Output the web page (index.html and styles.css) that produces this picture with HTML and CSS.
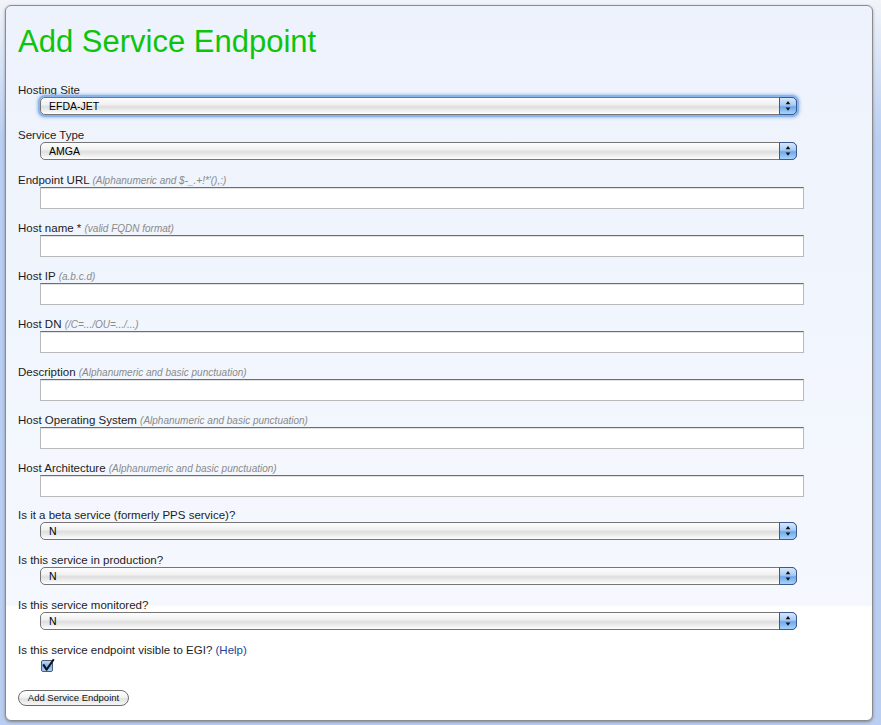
FILE: index.html
```html
<!DOCTYPE html>
<html>
<head>
<meta charset="utf-8">
<title>Add Service Endpoint</title>
<link rel="stylesheet" href="styles.css">
</head>
<body>
<div class="page">
  <div class="panel">
    <h1 class="title">Add Service Endpoint</h1>
    <form class="form">
      <div class="field field-select">
        <label class="lbl">Hosting Site</label>
        <div class="sel sel-focus">
          <select class="sel-input"><option>EFDA-JET</option></select>
          <span class="sel-btn"><svg width="17" height="18" viewBox="0 0 17 18"><path d="M8.5 3.8 L11 7.2 L6 7.2 Z M6 10.6 L11 10.6 L8.5 14 Z" fill="#111"/></svg></span>
        </div>
      </div>
      <div class="field field-select">
        <label class="lbl">Service Type</label>
        <div class="sel">
          <select class="sel-input"><option>AMGA</option></select>
          <span class="sel-btn"><svg width="17" height="18" viewBox="0 0 17 18"><path d="M8.5 3.8 L11 7.2 L6 7.2 Z M6 10.6 L11 10.6 L8.5 14 Z" fill="#111"/></svg></span>
        </div>
      </div>
      <div class="field field-input">
        <label class="lbl">Endpoint URL <span class="hint">(Alphanumeric and $-_.+!*'(),:)</span></label>
        <input class="txt" type="text">
      </div>
      <div class="field field-input">
        <label class="lbl">Host name * <span class="hint">(valid FQDN format)</span></label>
        <input class="txt" type="text">
      </div>
      <div class="field field-input">
        <label class="lbl">Host IP <span class="hint">(a.b.c.d)</span></label>
        <input class="txt" type="text">
      </div>
      <div class="field field-input">
        <label class="lbl">Host DN <span class="hint">(/C=.../OU=.../...)</span></label>
        <input class="txt" type="text">
      </div>
      <div class="field field-input">
        <label class="lbl">Description <span class="hint">(Alphanumeric and basic punctuation)</span></label>
        <input class="txt" type="text">
      </div>
      <div class="field field-input">
        <label class="lbl">Host Operating System <span class="hint">(Alphanumeric and basic punctuation)</span></label>
        <input class="txt" type="text">
      </div>
      <div class="field field-input field-last">
        <label class="lbl">Host Architecture <span class="hint">(Alphanumeric and basic punctuation)</span></label>
        <input class="txt" type="text">
      </div>
      <div class="field field-select">
        <label class="lbl">Is it a beta service (formerly PPS service)?</label>
        <div class="sel">
          <select class="sel-input"><option>N</option></select>
          <span class="sel-btn"><svg width="17" height="18" viewBox="0 0 17 18"><path d="M8.5 3.8 L11 7.2 L6 7.2 Z M6 10.6 L11 10.6 L8.5 14 Z" fill="#111"/></svg></span>
        </div>
      </div>
      <div class="field field-select">
        <label class="lbl">Is this service in production?</label>
        <div class="sel">
          <select class="sel-input"><option>N</option></select>
          <span class="sel-btn"><svg width="17" height="18" viewBox="0 0 17 18"><path d="M8.5 3.8 L11 7.2 L6 7.2 Z M6 10.6 L11 10.6 L8.5 14 Z" fill="#111"/></svg></span>
        </div>
      </div>
      <div class="field field-select">
        <label class="lbl">Is this service monitored?</label>
        <div class="sel">
          <select class="sel-input"><option>N</option></select>
          <span class="sel-btn"><svg width="17" height="18" viewBox="0 0 17 18"><path d="M8.5 3.8 L11 7.2 L6 7.2 Z M6 10.6 L11 10.6 L8.5 14 Z" fill="#111"/></svg></span>
        </div>
      </div>
      <div class="field field-check">
        <label class="lbl">Is this service endpoint visible to EGI? <a class="help" href="#">(Help)</a></label>
        <div class="check">
          <svg width="16" height="16" viewBox="0 0 16 16">
            <defs>
              <linearGradient id="cb" x1="0" y1="0" x2="0" y2="1">
                <stop offset="0" stop-color="#c9def8"/>
                <stop offset="0.5" stop-color="#7fb0ec"/>
                <stop offset="1" stop-color="#a9d2fb"/>
              </linearGradient>
            </defs>
            <rect x="1.5" y="3.5" width="11" height="11" rx="1.5" fill="url(#cb)" stroke="#4a5f80"/>
            <path d="M3.2 7.4 L6.6 12.6 L13.8 2.2" fill="none" stroke="#111" stroke-width="2" stroke-linejoin="round"/>
          </svg>
        </div>
      </div>
      <div class="actions">
        <button class="btn" type="button">Add Service Endpoint</button>
      </div>
    </form>
  </div>
</div>
</body>
</html>
```
FILE: styles.css
```css
html, body {
  margin: 0;
  padding: 0;
}
body {
  background: linear-gradient(#f1f4f9 0px, #b9cef1 140px) no-repeat, #b9cef1;
  font-family: "Liberation Sans", Arial, sans-serif;
  color: #1a1a1a;
}
.page {
  padding: 5px 8px 6px 5px;
}
.panel {
  box-sizing: border-box;
  width: 868px;
  border: 1px solid #8c8c8c;
  border-radius: 6px;
  box-shadow: 0 1px 3px rgba(0, 0, 0, 0.35);
  background-color: #ffffff;
  background-image: linear-gradient(#edf2fc, #f5f8fe);
  background-repeat: no-repeat;
  background-size: 100% 600px;
  padding: 17px 12px 14px 12px;
}
.title {
  margin: 0 0 22px 0;
  font-size: 31px;
  line-height: 38px;
  font-weight: normal;
  color: #0dc40d;
}
.form {
  display: flex;
  flex-direction: column;
  margin: 0;
}
.field {
  display: flex;
  flex-direction: column;
}
.field-select {
  margin-bottom: 13px;
}
.field-input {
  margin-bottom: 12px;
}
.field-last {
  margin-bottom: 11px;
}
.lbl {
  display: block;
  height: 14px;
  font-size: 11.5px;
  line-height: 14px;
  color: #1c1c1c;
  white-space: nowrap;
}
.hint {
  font-style: italic;
  font-size: 10px;
  line-height: 10px;
  color: #8a8a8a;
}
.help {
  color: #24449a;
  text-decoration: none;
}
.sel {
  position: relative;
  margin-left: 22px;
  width: 757px;
  height: 18px;
  border-radius: 5px;
}
.sel-focus {
  box-shadow: 0 0 0 2px #8ab4ea, 0 0 3px 3px rgba(110, 160, 230, 0.55);
}
.sel-input {
  -webkit-appearance: none;
  appearance: none;
  box-sizing: border-box;
  display: block;
  width: 100%;
  height: 18px;
  margin: 0;
  padding: 0 0 0 8px;
  border: 1px solid #757575;
  border-radius: 5px;
  background: linear-gradient(#fdfdfd 0%, #f1f1f1 40%, #dedede 55%, #f3f3f3 85%, #ffffff 100%);
  font-family: "Liberation Sans", Arial, sans-serif;
  font-size: 10.5px;
  line-height: 16px;
  color: #000;
  outline: none;
}
.sel-btn {
  position: absolute;
  top: 0;
  right: 0;
  box-sizing: border-box;
  width: 18px;
  height: 18px;
  border: 1px solid #3c5a92;
  border-radius: 0 5px 5px 0;
  background: linear-gradient(#d6e8fc 0%, #a7cbf4 45%, #6fa7ea 55%, #a6d4fb 100%);
  display: flex;
  align-items: center;
  justify-content: center;
}
.sel-btn svg {
  display: block;
}
.txt {
  box-sizing: border-box;
  display: block;
  margin: 0 0 0 22px;
  width: 764px;
  height: 22px;
  border: 1px solid #b9b9b9;
  border-top-color: #6e6e6e;
  box-shadow: inset 0 1px 0 #e2e2e2;
  background: #fff;
  outline: none;
  padding: 0 3px;
  font-family: "Liberation Sans", Arial, sans-serif;
  font-size: 11px;
}
.check {
  margin-left: 22px;
  height: 16px;
}
.check svg {
  display: block;
}
.actions {
  margin-top: 14px;
}
.btn {
  box-sizing: border-box;
  width: 111px;
  height: 16px;
  padding: 0;
  border: 1px solid #6d6d6d;
  border-radius: 8px;
  background: linear-gradient(#ffffff 0%, #f3f3f3 45%, #e2e2e2 55%, #f6f6f6 100%);
  font-family: "Liberation Sans", Arial, sans-serif;
  font-size: 9.5px;
  line-height: 14px;
  color: #111;
}
```
